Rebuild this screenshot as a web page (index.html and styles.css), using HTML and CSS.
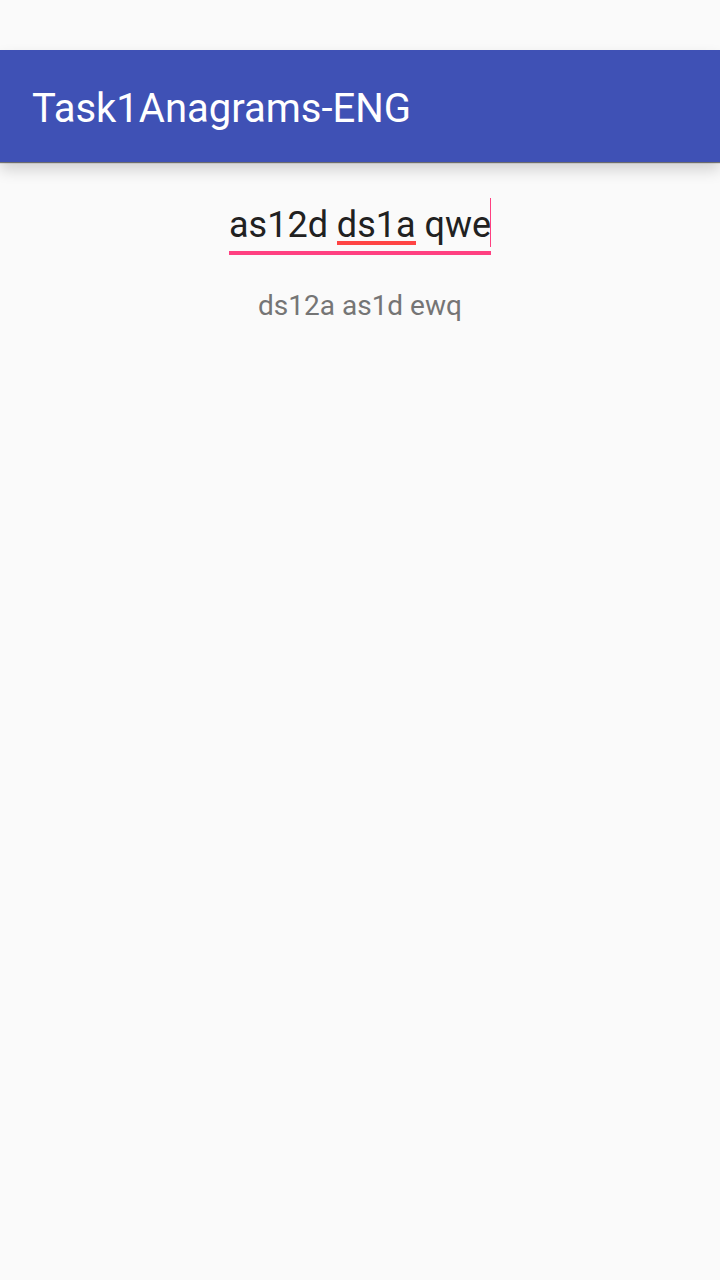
FILE: index.html
```html
<!DOCTYPE html>
<html lang="en">
<head>
<meta charset="utf-8">
<meta name="viewport" content="width=device-width, initial-scale=1">
<title>Task1Anagrams-ENG</title>
<link rel="stylesheet" href="styles.css">
</head>
<body>
<header class="toolbar">
  <h1 class="toolbar-title">Task1Anagrams-ENG</h1>
</header>
<main class="content">
  <div class="field">
    <input class="field-input" id="source" type="text" value="as12d ds1a qwe" aria-label="Text to reverse" spellcheck="false" autocomplete="off">
    <span class="misspelling" aria-hidden="true"></span>
    <span class="caret" aria-hidden="true"></span>
  </div>
  <output class="result" for="source">ds12a as1d ewq</output>
</main>
</body>
</html>
```

FILE: styles.css
```css
* {
  box-sizing: border-box;
}

body {
  margin: 0;
  padding-top: 50px;
  min-height: 100vh;
  background: #fafafa;
  font-family: Roboto, sans-serif;
}

.toolbar {
  display: flex;
  align-items: center;
  min-height: 112px;
  padding: 0 32px;
  background: #3f51b5;
  box-shadow: 0 1px 1px rgba(0, 0, 0, 0.5), 0 8px 14px rgba(0, 0, 0, 0.16);
}

.toolbar-title {
  margin: 0;
  padding-top: 6px;
  color: #fff;
  font-size: 40px;
  font-weight: 400;
  line-height: 48px;
}

.content {
  display: flex;
  flex-direction: column;
  align-items: center;
  gap: 32px;
  padding: 36px 32px;
}

.field {
  position: relative;
  display: flex;
  border-bottom: 4px solid #ff4081;
}

.field-input {
  width: 262px;
  height: 53px;
  padding: 1px 0 0;
  border: 0;
  outline: 0;
  background: transparent;
  color: #212121;
  font: 400 36px/52px Roboto, sans-serif;
}

.misspelling {
  position: absolute;
  left: 108px;
  bottom: 6px;
  width: 79px;
  height: 4px;
  background: #ff4444;
}

.caret {
  position: absolute;
  right: 0;
  top: 0;
  width: 1px;
  height: 49px;
  background: #ff4081;
}

.result {
  color: #757575;
  font-size: 28px;
  line-height: 38px;
}
```
